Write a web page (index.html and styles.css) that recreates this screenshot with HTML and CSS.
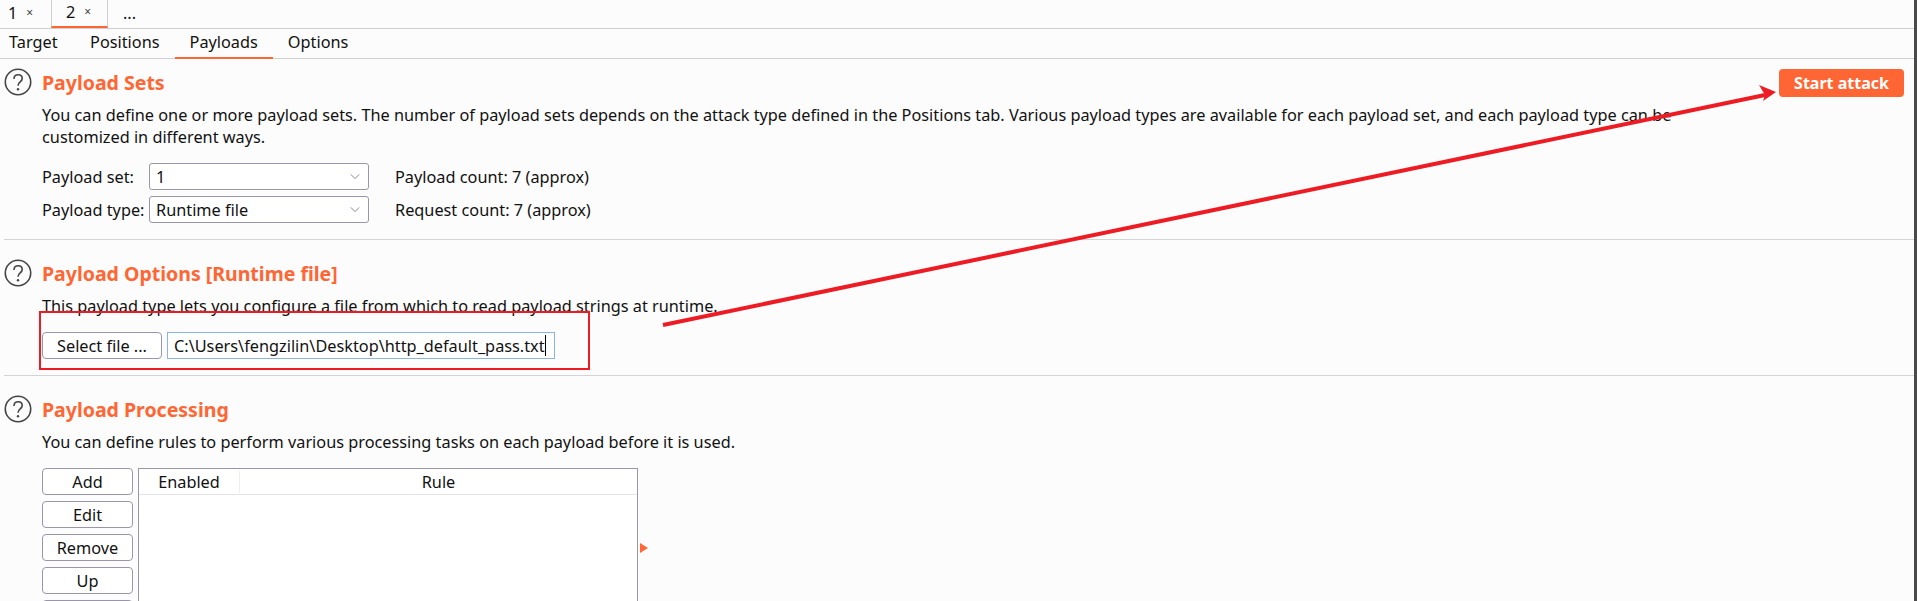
FILE: index.html
```html
<!DOCTYPE html>
<html lang="en">
<head>
  <meta charset="UTF-8">
  <title>Intruder Payloads</title>
  <link rel="stylesheet" href="styles.css">
</head>
<body>
  <div class="app">
    <div class="tabs">
      <div class="tab">1 <span class="close">×</span></div>
      <div class="tab active">2 <span class="close">×</span></div>
      <div class="tab more">...</div>
    </div>
    <div class="subtabs">
      <div class="subtab">Target</div>
      <div class="subtab">Positions</div>
      <div class="subtab active">Payloads</div>
      <div class="subtab">Options</div>
    </div>

    <div class="section first">
      <div class="section-head">
        <svg class="help" viewBox="0 0 28 28"><circle cx="14" cy="14" r="12.7"/><path d="M10 11c0-2.6 1.8-4.2 4.2-4.2s4 1.5 4 3.7c0 3.4-4.2 3.4-4.2 7.2"/><circle class="dot" cx="14" cy="21.3" r="1.2"/></svg>
        <h2>Payload Sets</h2>
        <button class="start">Start attack</button>
      </div>
      <p class="desc">You can define one or more payload sets. The number of payload sets depends on the attack type defined in the Positions tab. Various payload types are available for each payload set, and each payload type can be customized in different ways.</p>
      <div class="form-row">
        <label>Payload set:</label>
        <div class="select">1<svg viewBox="0 0 12 8"><path d="M1 1.5l5 5 5-5"/></svg></div>
        <span>Payload count: 7 (approx)</span>
      </div>
      <div class="form-row">
        <label>Payload type:</label>
        <div class="select">Runtime file<svg viewBox="0 0 12 8"><path d="M1 1.5l5 5 5-5"/></svg></div>
        <span>Request count: 7 (approx)</span>
      </div>
    </div>

    <div class="section">
      <div class="section-head">
        <svg class="help" viewBox="0 0 28 28"><circle cx="14" cy="14" r="12.7"/><path d="M10 11c0-2.6 1.8-4.2 4.2-4.2s4 1.5 4 3.7c0 3.4-4.2 3.4-4.2 7.2"/><circle class="dot" cx="14" cy="21.3" r="1.2"/></svg>
        <h2>Payload Options [Runtime file]</h2>
      </div>
      <p class="desc">This payload type lets you configure a file from which to read payload strings at runtime.</p>
      <div class="file-row">
        <button class="btn file-btn">Select file ...</button>
        <div class="file-input">C:\Users\fengzilin\Desktop\http_default_pass.txt<span class="caret"></span></div>
      </div>
    </div>

    <div class="section last">
      <div class="section-head">
        <svg class="help" viewBox="0 0 28 28"><circle cx="14" cy="14" r="12.7"/><path d="M10 11c0-2.6 1.8-4.2 4.2-4.2s4 1.5 4 3.7c0 3.4-4.2 3.4-4.2 7.2"/><circle class="dot" cx="14" cy="21.3" r="1.2"/></svg>
        <h2>Payload Processing</h2>
      </div>
      <p class="desc">You can define rules to perform various processing tasks on each payload before it is used.</p>
      <div class="rules">
        <div class="rule-buttons">
          <button class="btn">Add</button>
          <button class="btn">Edit</button>
          <button class="btn">Remove</button>
          <button class="btn">Up</button>
          <button class="btn"></button>
        </div>
        <div class="rule-table">
          <div class="rule-head">
            <div class="col-enabled">Enabled</div>
            <div class="col-rule">Rule</div>
          </div>
        </div>
        <div class="expand"></div>
      </div>
    </div>
  </div>
  <div class="edge"></div>

  <!-- red annotations drawn over the screenshot -->
  <div class="mark"></div>
  <svg class="arrow" viewBox="0 0 1917 601">
    <path d="M663 325L1765 95" />
    <polygon points="1776,92 1759,85 1765,95 1763,101" />
  </svg>
</body>
</html>
```

FILE: styles.css
```css
* {
  box-sizing: border-box;
}
html, body {
  margin: 0;
  height: 100%;
  overflow: hidden;
}
body {
  display: flex;
  font-family: "Noto Sans", Arial, sans-serif;
  font-size: 16.3px;
  color: #111;
  background-color: #fcfcfc;
}
.app {
  flex: 1;
  min-width: 0;
}
.edge {
  width: 3px;
  background-color: #4a4a4a;
}
.tabs {
  display: flex;
  height: 29px;
  border-bottom: 1px solid #d0d0d0;
}
.tab {
  display: flex;
  align-items: center;
  gap: 9px;
  width: 51px;
  padding: 0 0 3px 8px;
}
.tab .close {
  font-size: 12px;
  color: #444;
}
.tab.active {
  width: 57px;
  padding-left: 14px;
  border-left: 1px solid #d0d0d0;
  border-right: 1px solid #d0d0d0;
  border-bottom: 2px solid #ff6633;
}
.tab.more {
  width: 44px;
  padding-left: 15px;
}
.subtabs {
  display: flex;
  height: 30px;
  border-bottom: 1px solid #d0d0d0;
}
.subtab {
  height: 30px;
  padding: 2px 15px 0;
}
.subtab:first-child {
  padding-left: 9px;
  padding-right: 17.5px;
}
.subtab.active {
  border-bottom: 2px solid #ff6633;
}
.section {
  margin-left: 4px;
  padding: 19px 10px 16px 0;
  border-bottom: 1px solid #d4d4d4;
}
.section.first {
  padding-top: 9px;
}
.section.last {
  border-bottom: none;
}
.section-head {
  display: flex;
  align-items: center;
  height: 28px;
}
.help {
  width: 28px;
  height: 28px;
  flex: none;
  fill: none;
  stroke: #444;
  stroke-width: 1.6;
}
.help .dot {
  fill: #444;
  stroke: none;
}
h2 {
  margin: 0 0 0 10px;
  font-size: 19.5px;
  font-weight: 700;
  color: #ff6633;
}
.start {
  margin: 2px 0 0 auto;
  width: 125px;
  height: 28px;
  border: none;
  border-radius: 4px;
  background-color: #ff6633;
  color: #fff;
  font-family: inherit;
  font-size: 16px;
  font-weight: 700;
}
.desc {
  margin: 8px 0 15px 38px;
  max-width: 1660px;
  line-height: 22px;
}
.form-row {
  display: flex;
  align-items: center;
  height: 27px;
  margin: 0 0 6px 38px;
}
.form-row:last-child {
  margin-bottom: 0;
}
.form-row label {
  width: 107px;
  white-space: nowrap;
}
.select {
  display: flex;
  align-items: center;
  justify-content: space-between;
  width: 220px;
  height: 27px;
  margin-right: 26px;
  padding: 0 8px 0 6px;
  border: 1px solid #9a96a8;
  border-radius: 3px;
  background-color: #fff;
}
.select svg {
  width: 10px;
  height: 7px;
  fill: none;
  stroke: #888;
  stroke-width: 1.2;
}
.file-row {
  display: flex;
  gap: 5px;
  margin-left: 38px;
}
.btn {
  height: 27px;
  padding: 0;
  border: 1px solid #9a96a8;
  border-radius: 4px;
  background-color: #fff;
  color: #111;
  font-family: inherit;
  font-size: 16.3px;
}
.file-btn {
  width: 120px;
}
.file-input {
  display: flex;
  align-items: center;
  width: 388px;
  height: 27px;
  padding-left: 6px;
  border: 1px solid #8cb4e0;
  background-color: #fff;
}
.caret {
  width: 1px;
  height: 21px;
  background-color: #000;
}
.rules {
  display: flex;
  margin-left: 38px;
}
.rule-buttons {
  display: flex;
  flex-direction: column;
  gap: 6px;
  width: 91px;
  margin-right: 5px;
}
.rule-table {
  width: 500px;
  height: 240px;
  border: 1px solid #9a96a8;
  background-color: #fff;
}
.rule-head {
  display: flex;
  align-items: center;
  height: 26px;
  border-bottom: 1px solid #e4e4e4;
  text-align: center;
}
.col-enabled {
  width: 101px;
  height: 22px;
  line-height: 22px;
  border-right: 1px solid #eee;
}
.col-rule {
  flex: 1;
  height: 22px;
  line-height: 22px;
}
.expand {
  width: 0;
  height: 0;
  margin: 75px 0 0 2px;
  border-left: 8px solid #ff6633;
  border-top: 5px solid transparent;
  border-bottom: 5px solid transparent;
}
.mark {
  position: absolute;
  left: 39px;
  top: 311px;
  width: 551px;
  height: 59px;
  border: 2px solid #ed1c24;
}
.arrow {
  position: absolute;
  left: 0;
  top: 0;
  width: 1917px;
  height: 601px;
  pointer-events: none;
}
.arrow path {
  fill: none;
  stroke: #ed1c24;
  stroke-width: 4;
}
.arrow polygon {
  fill: #ed1c24;
}
```
